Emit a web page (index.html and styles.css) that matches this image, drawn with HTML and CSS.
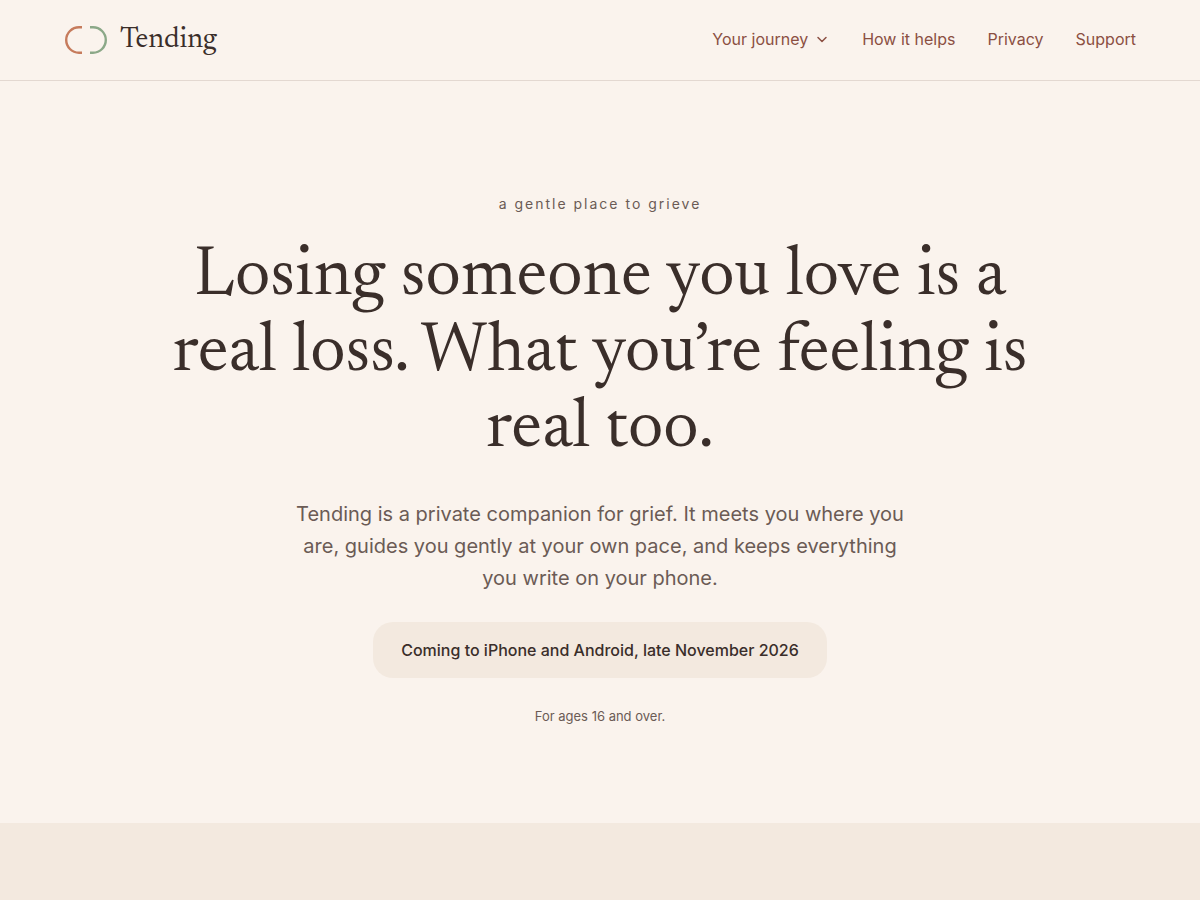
FILE: index.html
```
<!DOCTYPE html>
<html lang="en">
	<head>
		<meta charset="UTF-8">
		<meta name="viewport" content="width=device-width, initial-scale=1">
		<title>Tending</title>
		<link rel="stylesheet" href="styles.css">
	</head>
	<body>
		<header class="header">
			<a href="#" class="brand">
				<svg class="brand-mark" width="44" height="32" viewBox="0 0 44 32" fill="none" stroke-width="2.4" aria-hidden="true">
					<path d="M18 3.3h-3a12.8 12.7 0 0 0 0 25.4h3" stroke="#c67b5c"/>
					<path d="M26 3.3h3a12.8 12.7 0 0 1 0 25.4h-3" stroke="#8ba888"/>
				</svg>
				<span class="brand-name">Tending</span>
			</a>
			<nav class="nav">
				<button type="button" class="nav-menu">
					Your journey
					<svg width="16" height="16" viewBox="0 0 16 16" fill="none" stroke="currentColor" stroke-width="1.5" stroke-linecap="round" stroke-linejoin="round" aria-hidden="true">
						<path d="M4 6.5l4 4 4-4"/>
					</svg>
				</button>
				<a href="#how">How it helps</a>
				<a href="#privacy">Privacy</a>
				<a href="#support">Support</a>
			</nav>
		</header>
		<main>
			<section class="hero">
				<p class="eyebrow">a gentle place to grieve</p>
				<h1>Losing someone you love is a real loss. What you’re feeling is real too.</h1>
				<p class="lead">Tending is a private companion for grief. It meets you where you are, guides you gently at your own pace, and keeps everything you write on your phone.</p>
				<p class="launch">Coming to iPhone and Android, late November 2026</p>
				<p class="ages">For ages 16 and over.</p>
			</section>
			<section class="band" id="how"></section>
		</main>
	</body>
</html>
```

FILE: styles.css
```
*{
	box-sizing: border-box;
	padding: 0;
	margin: 0;
}
body{
	background: #faf3ed;
	color: #3a2e2a;
	font-family: Inter, "Liberation Sans", sans-serif;
	font-size: 16px;
	line-height: 24px;
}
a{
	color: inherit;
	text-decoration: none;
}
.header{
	display: flex;
	align-items: center;
	justify-content: space-between;
	padding: 19px 64px;
	border-bottom: 1px solid #e3d8d1;
}
.brand{
	display: flex;
	align-items: center;
	gap: 12px;
	font-family: Newsreader, "Liberation Serif", serif;
	font-size: 29px;
	line-height: 40px;
}
.brand-name{
	padding-top: 2px;
}
.nav{
	display: flex;
	align-items: center;
	gap: 32px;
	padding-bottom: 2px;
	color: #8b4f42;
}
.nav-menu{
	display: flex;
	align-items: center;
	gap: 6px;
	border: 0;
	background: none;
	color: inherit;
	font: inherit;
	cursor: pointer;
}
.hero{
	display: flex;
	flex-direction: column;
	align-items: center;
	padding: 112px 64px 97px;
	text-align: center;
}
.eyebrow{
	color: #6b5b55;
	font-size: 14px;
	line-height: 22px;
	letter-spacing: 2px;
}
h1{
	max-width: 880px;
	margin-top: 25px;
	font-family: Newsreader, "Liberation Serif", serif;
	font-size: 70px;
	font-weight: 400;
	line-height: 76px;
}
.lead{
	max-width: 620px;
	margin-top: 30px;
	color: #6b5b55;
	font-size: 20px;
	line-height: 32px;
}
.launch{
	margin-top: 28px;
	padding: 16px 28px;
	border-radius: 20px;
	background: #f3e9df;
	font-weight: 500;
}
.ages{
	margin-top: 28px;
	color: #6b5b55;
	font-size: 13px;
	line-height: 20px;
}
.band{
	min-height: 320px;
	background: #f3e9df;
}
```
